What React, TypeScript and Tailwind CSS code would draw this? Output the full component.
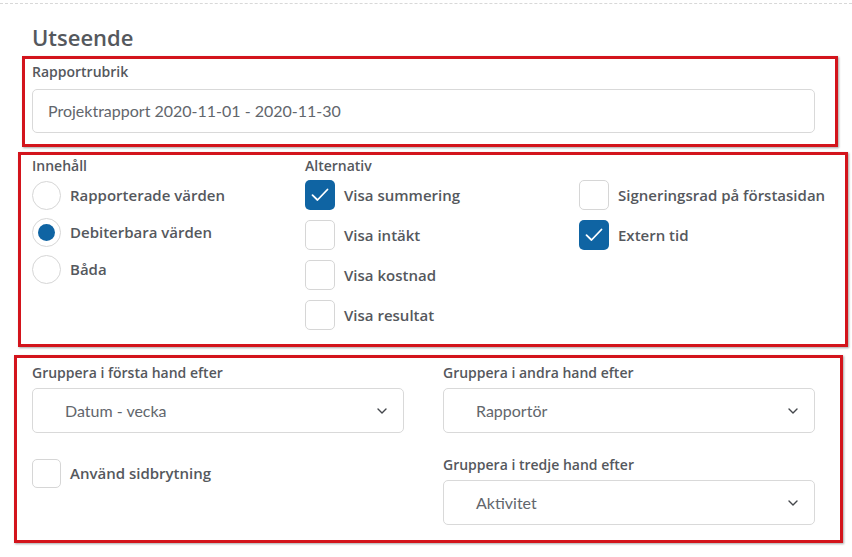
import React from "react";

const font = { fontFamily: "Lato, 'Open Sans', Arial, sans-serif" };
const bold = { fontFamily: "'Open Sans', Lato, Arial, sans-serif" };

function Radio({ checked, label }: { checked?: boolean; label: string }) {
  return (
    <div className="flex items-center h-[37px]">
      <div className="w-[29px] h-[29px] rounded-full border border-[#d6d6d6] bg-white flex items-center justify-center shrink-0">
        {checked && <div className="w-[17px] h-[17px] rounded-full bg-[#0f64a3]" />}
      </div>
      <span className="ml-[9px] text-[15px] font-semibold text-[#55585d]" style={bold}>{label}</span>
    </div>
  );
}

function Check({ checked, label }: { checked?: boolean; label: string }) {
  return (
    <div className="flex items-center h-[40px]">
      <div
        className={
          checked
            ? "w-[30px] h-[30px] rounded-[5px] bg-[#0f64a3] flex items-center justify-center shrink-0"
            : "w-[30px] h-[30px] rounded-[5px] border border-[#d6d6d6] bg-white shrink-0"
        }
      >
        {checked && (
          <svg width="18" height="14" viewBox="0 0 18 14" fill="none">
            <path d="M1.5 7.2 L6.5 12 L16.5 1.5" stroke="white" strokeWidth="1.8" strokeLinecap="round" strokeLinejoin="round" />
          </svg>
        )}
      </div>
      <span className="ml-[9px] text-[15px] font-semibold text-[#55585d] whitespace-nowrap" style={bold}>{label}</span>
    </div>
  );
}

function Select({ value }: { value: string }) {
  return (
    <div className="h-[45px] rounded-[5px] border border-[#d9d9d9] bg-white flex items-center pl-[32px] pr-[16px]">
      <span className="flex-1 text-[16px] text-[#62666c]">{value}</span>
      <svg width="10" height="6" viewBox="0 0 10 6" fill="none">
        <path d="M1 1 L5 5 L9 1" stroke="#44474c" strokeWidth="1.4" strokeLinecap="round" strokeLinejoin="round" />
      </svg>
    </div>
  );
}

function Label({ children, className = "" }: { children: React.ReactNode; className?: string }) {
  return (
    <div className={"text-[14px] leading-[18px] font-semibold text-[#55585d] " + className} style={bold}>
      {children}
    </div>
  );
}

export default function App() {
  return (
    <div className="relative w-[852px] h-[557px] bg-white overflow-hidden" style={font}>
      <div className="pt-[3px]">
        <div className="border-t border-dashed border-[#d8d8d8]" />
      </div>
      <div className="pl-[32px] w-[815px]">
        <h1 className="mt-[19px] text-[22px] leading-[28px] font-semibold text-[#55585d]" style={bold}>Utseende</h1>

        <div className="mt-[12px]">
          <Label>Rapportrubrik</Label>
          <div className="mt-[8px] h-[44px] rounded-[5px] border border-[#d9d9d9] bg-white flex items-center pl-[15px]">
            <span className="text-[16px] text-[#62666c]">Projektrapport 2020-11-01 - 2020-11-30</span>
          </div>
        </div>

        <div className="mt-[24px] flex">
          <div className="w-[273px] shrink-0">
            <Label>Innehåll</Label>
            <div className="mt-[2px]">
              <Radio label="Rapporterade värden" />
              <Radio checked label="Debiterbara värden" />
              <Radio label="Båda" />
            </div>
          </div>
          <div className="w-[274px] shrink-0">
            <Label>Alternativ</Label>
            <div className="mt-[0px]">
              <Check checked label="Visa summering" />
              <Check label="Visa intäkt" />
              <Check label="Visa kostnad" />
              <Check label="Visa resultat" />
            </div>
          </div>
          <div className="pt-[18px] shrink-0">
            <Check label="Signeringsrad på förstasidan" />
            <Check checked label="Extern tid" />
          </div>
        </div>

        <div className="mt-[29px] flex gap-[39px]">
          <div className="w-[372px]">
            <Label>Gruppera i första hand efter</Label>
            <div className="mt-[6px]">
              <Select value="Datum - vecka" />
            </div>
            <div className="mt-[26px] flex items-center">
              <div className="w-[29px] h-[29px] rounded-[5px] border border-[#d6d6d6] bg-white shrink-0" />
              <span className="ml-[9px] text-[15px] font-semibold text-[#55585d]" style={bold}>Använd sidbrytning</span>
            </div>
          </div>
          <div className="w-[372px]">
            <Label>Gruppera i andra hand efter</Label>
            <div className="mt-[6px]">
              <Select value="Rapportör" />
            </div>
            <Label className="mt-[23px]">Gruppera i tredje hand efter</Label>
            <div className="mt-[6px]">
              <Select value="Aktivitet" />
            </div>
          </div>
        </div>
      </div>

      <div className="absolute left-[22px] top-[56px] w-[816px] h-[91px] border-[3px] border-[#d3141c] shadow-[1px_1px_2px_rgba(0,0,0,0.35)]" />
      <div className="absolute left-[18px] top-[152px] w-[830px] h-[195px] border-[3px] border-[#d3141c] shadow-[1px_1px_2px_rgba(0,0,0,0.35)]" />
      <div className="absolute left-[14px] top-[355px] w-[829px] h-[188px] border-[3px] border-[#d3141c] shadow-[1px_1px_2px_rgba(0,0,0,0.35)]" />
    </div>
  );
}
